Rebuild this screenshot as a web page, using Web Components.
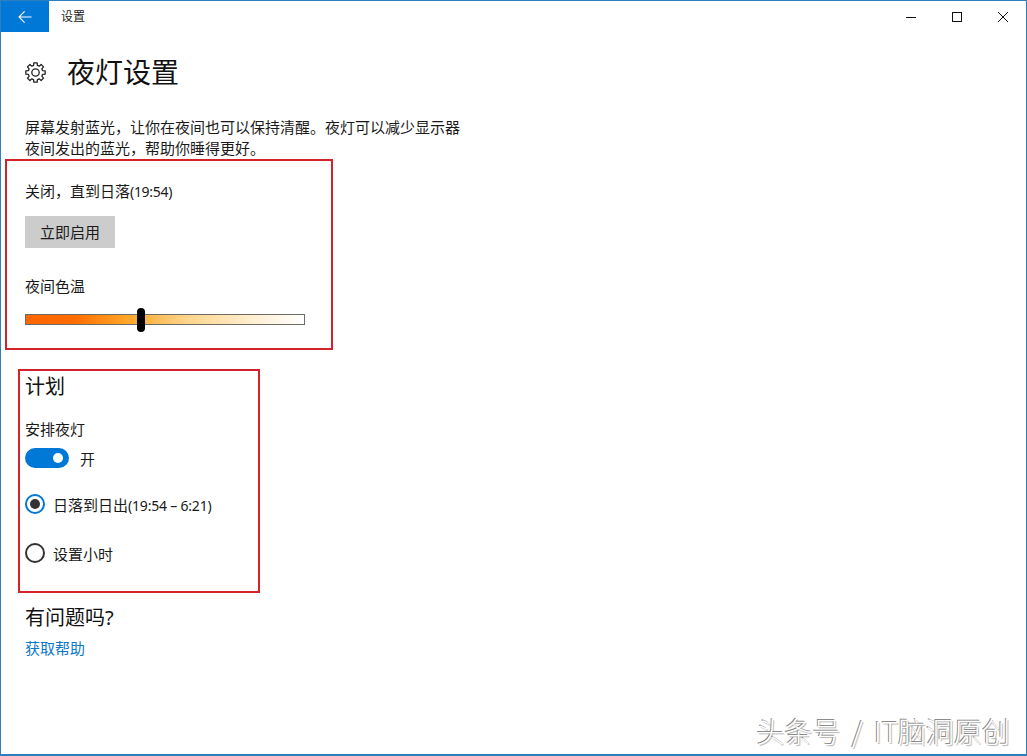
<!DOCTYPE html>
<html lang="zh-CN">
<head>
<meta charset="utf-8">
<title>设置</title>
<style>
  html, body { margin: 0; padding: 0; background: #fff; }
  body { font-family: "Noto Sans", "Noto Sans CJK SC", sans-serif; color: #1a1a1a; }
</style>
</head>
<body>
<settings-window>
  <title-bar slot="bar" label="设置"></title-bar>
  <page-heading>夜灯设置</page-heading>
  <p-text>屏幕发射蓝光，让你在夜间也可以保持清醒。夜灯可以减少显示器<br>夜间发出的蓝光，帮助你睡得更好。</p-text>
  <night-panel status="关闭，直到日落" time="(19:54)" action="立即启用" label="夜间色温"></night-panel>
  <schedule-panel></schedule-panel>
  <help-block></help-block>
</settings-window>

<script>
class SettingsWindow extends HTMLElement {
    constructor() {
        super();
        this.attachShadow({mode: "open"}).innerHTML = `
        <style>
            :host {
                display: flex;
                flex-direction: column;
                position: relative;
                box-sizing: border-box;
                width: 1027px;
                height: 756px;
                border: 1px solid #2d7fbd;
                border-width: 1px 1px 2px 1px;
                background: #fff;
                overflow: hidden;
            }
            main { display: flex; flex-direction: column; padding: 0 0 0 24px; }
            .mark {
                position: absolute;
                right: 16px;
                bottom: 5px;
                font: 300 28px/36px "Noto Sans CJK SC", sans-serif;
                word-spacing: 5px;
                color: #fff;
                text-shadow: -1px -1px 0 #8c8c8c, 1px 1px 1px #b0b0b0;
                white-space: nowrap;
            }
        </style>
        <slot name="bar"></slot>
        <main><slot></slot></main>
        <div class="mark">头条号 / IT脑洞原创</div>`;
    }
}

class TitleBar extends HTMLElement {
    constructor() {
        super();
        this.attachShadow({mode: "open"}).innerHTML = `
        <style>
            :host { display: flex; align-items: center; height: 31px; font-size: 12px; }
            .back {
                display: flex; align-items: center; justify-content: center;
                width: 48px; height: 31px; background: #0078d7;
            }
            .label { margin-left: 12px; padding-bottom: 2px; flex: 1; color: #222; }
            .ctl { display: flex; align-items: center; justify-content: center; width: 46px; height: 31px; }
            svg { display: block; }
        </style>
        <div class="back">
            <svg width="16" height="16" viewBox="0 0 16 16" fill="none" stroke="#fff" stroke-width="1.1">
                <path d="M2 8h12.5M7.6 2.4 2 8l5.6 5.6"/>
            </svg>
        </div>
        <div class="label">${this.getAttribute("label")}</div>
        <div class="ctl"><svg width="10" height="10" viewBox="0 0 10 10" stroke="#111" fill="none"><path d="M0 5.5h10"/></svg></div>
        <div class="ctl"><svg width="10" height="10" viewBox="0 0 10 10" stroke="#111" fill="none"><rect x=".5" y=".5" width="9" height="9"/></svg></div>
        <div class="ctl"><svg width="10" height="10" viewBox="0 0 10 10" stroke="#111" fill="none"><path d="M0 0l10 10M10 0 0 10"/></svg></div>`;
    }
}

// 8 square teeth around a ring
function gearPath(cx, cy, outer, inner) {
    const pt = (r, deg) => {
        const a = deg * Math.PI / 180;
        return (cx + r * Math.cos(a)).toFixed(2) + " " + (cy + r * Math.sin(a)).toFixed(2);
    };
    let d = "";
    for (let i = 0; i < 8; i++) {
        const c = i * 45 - 90;
        d += (i ? "L" : "M") + pt(inner, c - 15) + "L" + pt(outer, c - 10) + "L" + pt(outer, c + 10) + "L" + pt(inner, c + 15);
    }
    return d + "Z";
}

class PageHeading extends HTMLElement {
    constructor() {
        super();
        this.attachShadow({mode: "open"}).innerHTML = `
        <style>
            :host { display: flex; align-items: center; height: 40px; margin-top: 19px; gap: 22px; font-size: 28px; color: #111; }
            svg { display: block; margin-top: 2px; margin-right: -1px; }
        </style>
        <svg width="21" height="21" viewBox="0 0 21 21" fill="none" stroke="#222" stroke-width="1.3" stroke-linejoin="round">
            <path d="${gearPath(10.5, 10.5, 9.8, 7.3)}"/>
            <circle cx="10.5" cy="10.5" r="3.7"/>
        </svg>
        <slot></slot>`;
    }
}

class PText extends HTMLElement {
    constructor() {
        super();
        this.attachShadow({mode: "open"}).innerHTML = `
        <style>
            :host { display: block; margin-top: 26px; font-size: 15px; line-height: 21px; color: #1a1a1a; }
        </style>
        <slot></slot>`;
    }
}

class NightPanel extends HTMLElement {
    constructor() {
        super();
        this.attachShadow({mode: "open"}).innerHTML = `
        <style>
            :host { display: flex; flex-direction: column; align-items: flex-start; position: relative; margin-top: 22px; font-size: 15px; color: #1a1a1a; }
            .status { height: 20px; line-height: 20px; }
            .status span { font-size: 14px; letter-spacing: -.3px; }
            button {
                all: unset;
                margin-top: 15px;
                width: 90px; height: 32px;
                background: #ccc;
                text-align: center;
                font-size: 15px;
                line-height: 32px;
            }
            .label { margin-top: 28px; line-height: 20px; }
            .track {
                position: relative;
                box-sizing: border-box;
                margin-top: 18px;
                width: 280px; height: 11px;
                border: 1px solid #6e6a64;
                background: linear-gradient(90deg, #ff6600 0, #ff6c00 17%, #ffa526 36%, #ffd58c 58%, #ffefd2 82%, #fff 100%);
            }
            .thumb {
                position: absolute;
                left: 111px; top: -7px;
                width: 8px; height: 24px;
                border-radius: 4px;
                background: #000;
            }
            .frame {
                position: absolute;
                left: -20px; top: -22px;
                width: 324px; height: 187px;
                border: 2px solid #d3222a;
            }
        </style>
        <div class="status">${this.getAttribute("status")}<span>${this.getAttribute("time")}</span></div>
        <button>${this.getAttribute("action")}</button>
        <div class="label">${this.getAttribute("label")}</div>
        <div class="track"><div class="thumb"></div></div>
        <div class="frame"></div>`;
    }
}

class ToggleRow extends HTMLElement {
    constructor() {
        super();
        this.attachShadow({mode: "open"}).innerHTML = `
        <style>
            :host { display: flex; align-items: center; gap: 11px; height: 20px; }
            .sw { position: relative; width: 44px; height: 20px; border-radius: 10px; background: #0078d7; }
            .sw::after {
                content: ""; position: absolute; right: 6px; top: 5px;
                width: 10px; height: 10px; border-radius: 50%; background: #fff;
            }
        </style>
        <div class="sw"></div><slot></slot>`;
    }
}

class RadioRow extends HTMLElement {
    constructor() {
        super();
        const on = this.hasAttribute("checked");
        this.attachShadow({mode: "open"}).innerHTML = `
        <style>
            :host { display: flex; align-items: center; gap: 8px; height: 20px; }
            .dot {
                box-sizing: border-box;
                display: flex; align-items: center; justify-content: center;
                width: 20px; height: 20px; border-radius: 50%;
                border: 2px solid ${on ? "#0078d7" : "#333"};
            }
            .dot i { width: 10px; height: 10px; border-radius: 50%; background: #333; display: ${on ? "block" : "none"}; }
        </style>
        <div class="dot"><i></i></div><div><slot></slot></div>`;
    }
}

class SchedulePanel extends HTMLElement {
    constructor() {
        super();
        this.attachShadow({mode: "open"}).innerHTML = `
        <style>
            :host { display: flex; flex-direction: column; align-items: flex-start; position: relative; margin-top: 48px; font-size: 15px; color: #1a1a1a; }
            h2 { margin: 0; font-size: 20px; line-height: 28px; font-weight: 400; color: #111; }
            .sub { margin-top: 18px; line-height: 20px; }
            toggle-row { margin-top: 9px; }
            radio-row.a { margin-top: 26px; }
            radio-row.b { margin-top: 29px; }
            .tight { font-size: 14px; letter-spacing: -.2px; }
            .frame {
                position: absolute;
                left: -7px; top: -4px;
                width: 238px; height: 220px;
                border: 2px solid #d3222a;
            }
        </style>
        <h2>计划</h2>
        <div class="sub">安排夜灯</div>
        <toggle-row>开</toggle-row>
        <radio-row class="a" checked>日落到日出<span class="tight">(19:54 – 6:21)</span></radio-row>
        <radio-row class="b">设置小时</radio-row>
        <div class="frame"></div>`;
    }
}

class HelpBlock extends HTMLElement {
    constructor() {
        super();
        this.attachShadow({mode: "open"}).innerHTML = `
        <style>
            :host { display: block; margin-top: 41px; font-size: 15px; }
            h2 { margin: 0; font-size: 20px; line-height: 28px; font-weight: 400; color: #111; }
            a { display: block; margin-top: 6px; line-height: 20px; color: #0b78c8; }
        </style>
        <h2>有问题吗?</h2>
        <a>获取帮助</a>`;
    }
}

customElements.define("toggle-row", ToggleRow);
customElements.define("radio-row", RadioRow);
customElements.define("title-bar", TitleBar);
customElements.define("page-heading", PageHeading);
customElements.define("p-text", PText);
customElements.define("night-panel", NightPanel);
customElements.define("schedule-panel", SchedulePanel);
customElements.define("help-block", HelpBlock);
customElements.define("settings-window", SettingsWindow);
</script>
</body>
</html>
